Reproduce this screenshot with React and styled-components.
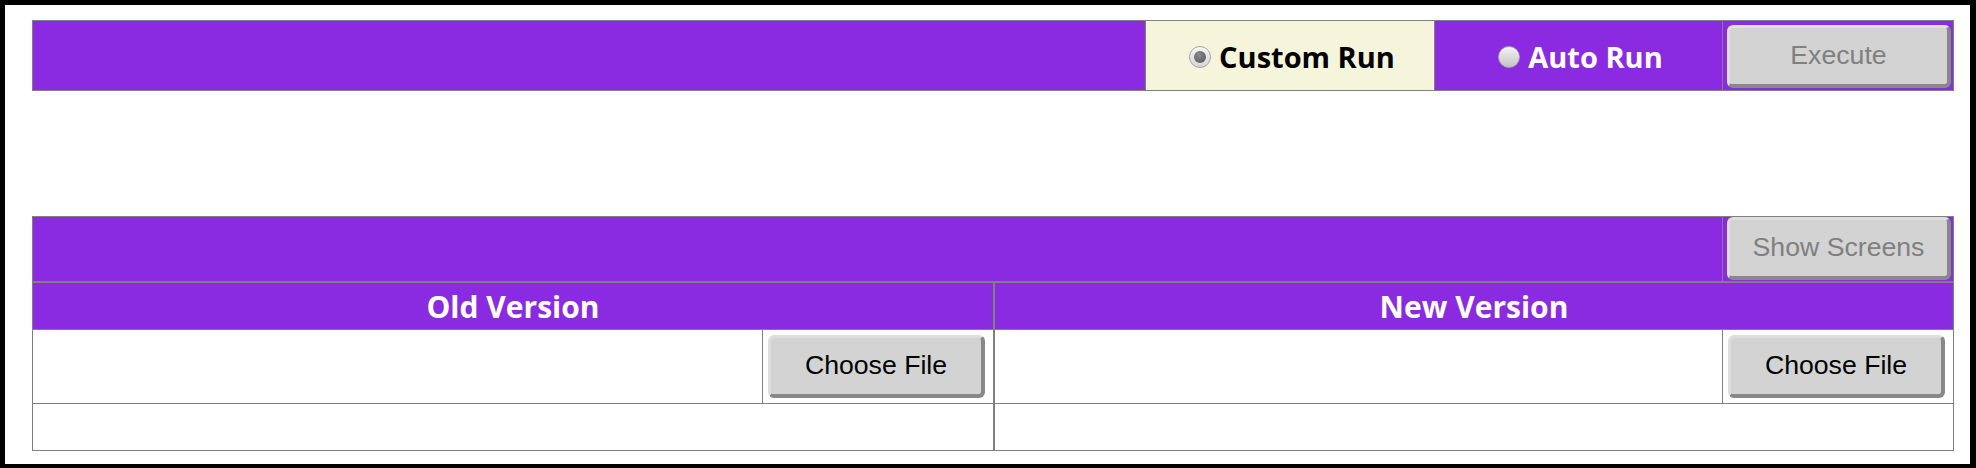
import styled, { createGlobalStyle } from 'styled-components';

const GlobalStyle = createGlobalStyle`
  html, body {
    margin: 0;
    padding: 0;
    background: #ffffff;
  }
  * {
    box-sizing: border-box;
  }
`;

const Frame = styled.div`
  width: 1976px;
  height: 468px;
  border-style: solid;
  border-color: #000000;
  border-width: 5px 6px 4px 5px;
  padding: 15px 16px 13px 27px;
  font-family: "Open Sans", "Noto Sans", sans-serif;
`;

const TopBar = styled.div`
  display: flex;
  height: 71px;
  background: #8a2be2;
  border: 1px solid #808080;
`;

const Spacer = styled.div`
  flex: 1;
`;

const ModeCell = styled.label`
  display: flex;
  align-items: center;
  justify-content: center;
  gap: 8px;
  width: ${(p) => p.$width}px;
  background: ${(p) => (p.$active ? '#f5f5dc' : 'transparent')};
  border-left: ${(p) => (p.$active ? '1px solid #808080' : 'none')};
  border-right: ${(p) => (p.$active ? '1px solid #808080' : 'none')};
  color: ${(p) => (p.$active ? '#000000' : '#ffffff')};
  font-size: 29px;
  font-weight: 700;
  padding: 2px 0 0 4px;
  cursor: pointer;
`;

const Radio = styled.span`
  position: relative;
  width: 22px;
  height: 22px;
  border-radius: 50%;
  border: 1px solid #a4a4a4;
  background: ${(p) =>
    p.$checked
      ? 'linear-gradient(#f4f4f4, #d6d6d6)'
      : 'linear-gradient(#f2f2f2, #c4c4c4)'};
  box-shadow: inset 0 1px 1px rgba(255, 255, 255, 0.8);
  flex: none;

  &::after {
    content: '';
    display: ${(p) => (p.$checked ? 'block' : 'none')};
    position: absolute;
    left: 4px;
    top: 4px;
    width: 12px;
    height: 12px;
    border-radius: 50%;
    background: radial-gradient(circle at 40% 35%, #8a8a8a, #555555);
  }
`;

const ActionCell = styled.div`
  display: flex;
  align-items: flex-start;
  width: 231px;
  border-left: 1px solid #808080;
  padding: ${(p) => p.$pad};
`;

const Button = styled.button`
  width: ${(p) => p.$width}px;
  height: 63px;
  padding: 0 0 2px;
  background: #d3d3d3;
  border-style: solid;
  border-width: 3px 4px 4px 3px;
  border-color: #dedede #888888 #888888 #dedede;
  border-radius: 6px;
  font-family: "Liberation Sans", Arial, sans-serif;
  font-size: 26.67px;
  color: ${(p) => (p.disabled ? '#808080' : '#000000')};
  cursor: ${(p) => (p.disabled ? 'default' : 'pointer')};
`;

const Panel = styled.div`
  margin-top: 125px;
  border: 1px solid #808080;
`;

const Toolbar = styled.div`
  display: flex;
  height: 66px;
  background: #8a2be2;
  border-bottom: 2px solid #808080;
`;

const Columns = styled.div`
  display: grid;
  grid-template-columns: 960px 1fr;
`;

const Column = styled.div`
  border-left: ${(p) => (p.$first ? 'none' : '2px solid #808080')};
`;

const Header = styled.div`
  display: flex;
  align-items: center;
  justify-content: center;
  height: 47px;
  background: #8a2be2;
  border-bottom: 1px solid #808080;
  color: #ffffff;
  font-size: 30px;
  font-weight: 700;
`;

const FileRow = styled.div`
  display: flex;
  height: 74px;
  border-bottom: 1px solid #808080;
`;

const FileName = styled.div`
  flex: 1;
`;

const InfoRow = styled.div`
  height: 46px;
`;

const VersionColumn = ({ title, first }) => (
  <Column $first={first}>
    <Header>{title}</Header>
    <FileRow>
      <FileName />
      <ActionCell $pad="5px 8px 5px 5px">
        <Button $width={217}>Choose File</Button>
      </ActionCell>
    </FileRow>
    <InfoRow />
  </Column>
);

const App = () => {
  return (
    <>
      <GlobalStyle />
      <Frame>
        <TopBar>
          <Spacer />
          <ModeCell $active $width={290}>
            <Radio $checked />
            Custom Run
          </ModeCell>
          <ModeCell $width={287}>
            <Radio />
            Auto Run
          </ModeCell>
          <ActionCell $pad="4px 2px 0 4px">
            <Button $width={224} disabled>
              Execute
            </Button>
          </ActionCell>
        </TopBar>
        <Panel>
          <Toolbar>
            <Spacer />
            <ActionCell $pad="0 2px 0 4px">
              <Button $width={224} disabled>
                Show Screens
              </Button>
            </ActionCell>
          </Toolbar>
          <Columns>
            <VersionColumn title="Old Version" first />
            <VersionColumn title="New Version" />
          </Columns>
        </Panel>
      </Frame>
    </>
  );
};

export default App;
